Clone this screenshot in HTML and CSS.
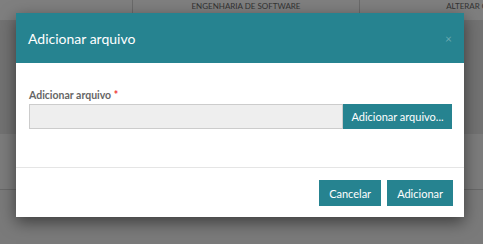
FILE: index.html
```html
<!DOCTYPE html>
<html lang="pt">
<head>
    <meta charset="UTF-8">
    <title>Adicionar arquivo</title>
    <link rel="stylesheet" href="styles.css">
</head>
<body>
    <div class="page">
        <div class="table-head">
            <div class="th th-first"></div>
            <div class="th th-mid">ENGENHARIA DE SOFTWARE</div>
            <div class="th th-last">ALTERAR CURSO</div>
        </div>
        <div class="band band-dark"></div>
        <div class="band band-light"></div>
        <div class="band band-bottom"></div>
    </div>

    <div class="modal">
        <div class="modal-header">
            <h4 class="modal-title">Adicionar arquivo</h4>
            <span class="close">&times;</span>
        </div>
        <div class="modal-body">
            <label class="field-label">Adicionar arquivo <span class="req">*</span></label>
            <div class="file-group">
                <input type="text" class="file-input" readonly>
                <button class="btn btn-file">Adicionar arquivo...</button>
            </div>
        </div>
        <div class="modal-footer">
            <button class="btn">Cancelar</button>
            <button class="btn">Adicionar</button>
        </div>
    </div>
</body>
</html>
```

FILE: styles.css
```css
body {
    margin: 0;
    background-color: #7a7a7a;
    font-family: Lato, "Liberation Sans", sans-serif;
    overflow: hidden;
}
.page {
    display: flex;
    flex-direction: column;
}
.table-head {
    display: flex;
    height: 20px;
    overflow: hidden;
    background-color: #7f7f7f;
}
.th {
    flex-shrink: 0;
    font-size: 8px;
    color: #333;
    line-height: 13px;
    text-align: center;
    border-right: 1px solid #6a6a6a;
}
.th-first {
    width: 132px;
}
.th-mid {
    width: 226px;
}
.th-last {
    width: 235px;
    border-right: none;
}
.band-dark {
    height: 114px;
    background-color: #727272;
}
.band-light {
    height: 55px;
    background-color: #7c7c7c;
    border-bottom: 1px solid #686868;
}
.band-bottom {
    height: 60px;
    background-color: #7a7a7a;
}
.modal {
    position: absolute;
    left: 16px;
    top: 13px;
    width: 448px;
    background-color: #fff;
    box-shadow: 0 5px 15px rgba(0, 0, 0, 0.5);
}
.modal-header {
    display: flex;
    align-items: center;
    justify-content: space-between;
    height: 50px;
    padding: 0 12px;
    background-color: #268390;
}
.modal-title {
    margin: 0;
    font-size: 14px;
    font-weight: normal;
    color: #fff;
}
.close {
    font-size: 12px;
    color: rgba(255, 255, 255, 0.3);
}
.modal-body {
    padding: 26px 12px 38px 13px;
    border-bottom: 1px solid #e5e5e5;
}
.field-label {
    display: block;
    font-size: 10.5px;
    font-weight: bold;
    color: #666;
    line-height: 13px;
    margin-bottom: 2px;
}
.req {
    color: #e33;
}
.file-group {
    display: flex;
}
.file-input {
    flex: 1;
    height: 25px;
    box-sizing: border-box;
    border: 1px solid #ccc;
    background-color: #eee;
    margin: 0;
    outline: none;
}
.btn {
    height: 26px;
    padding: 0 10px;
    border: none;
    background-color: #268390;
    color: #fff;
    font-family: Lato, "Liberation Sans", sans-serif;
    font-size: 11px;
    cursor: pointer;
}
.btn-file {
    height: 25px;
    width: 109px;
    padding: 0;
}
.modal-footer {
    display: flex;
    justify-content: flex-end;
    gap: 6px;
    padding: 12px 11px 11px;
}
```
